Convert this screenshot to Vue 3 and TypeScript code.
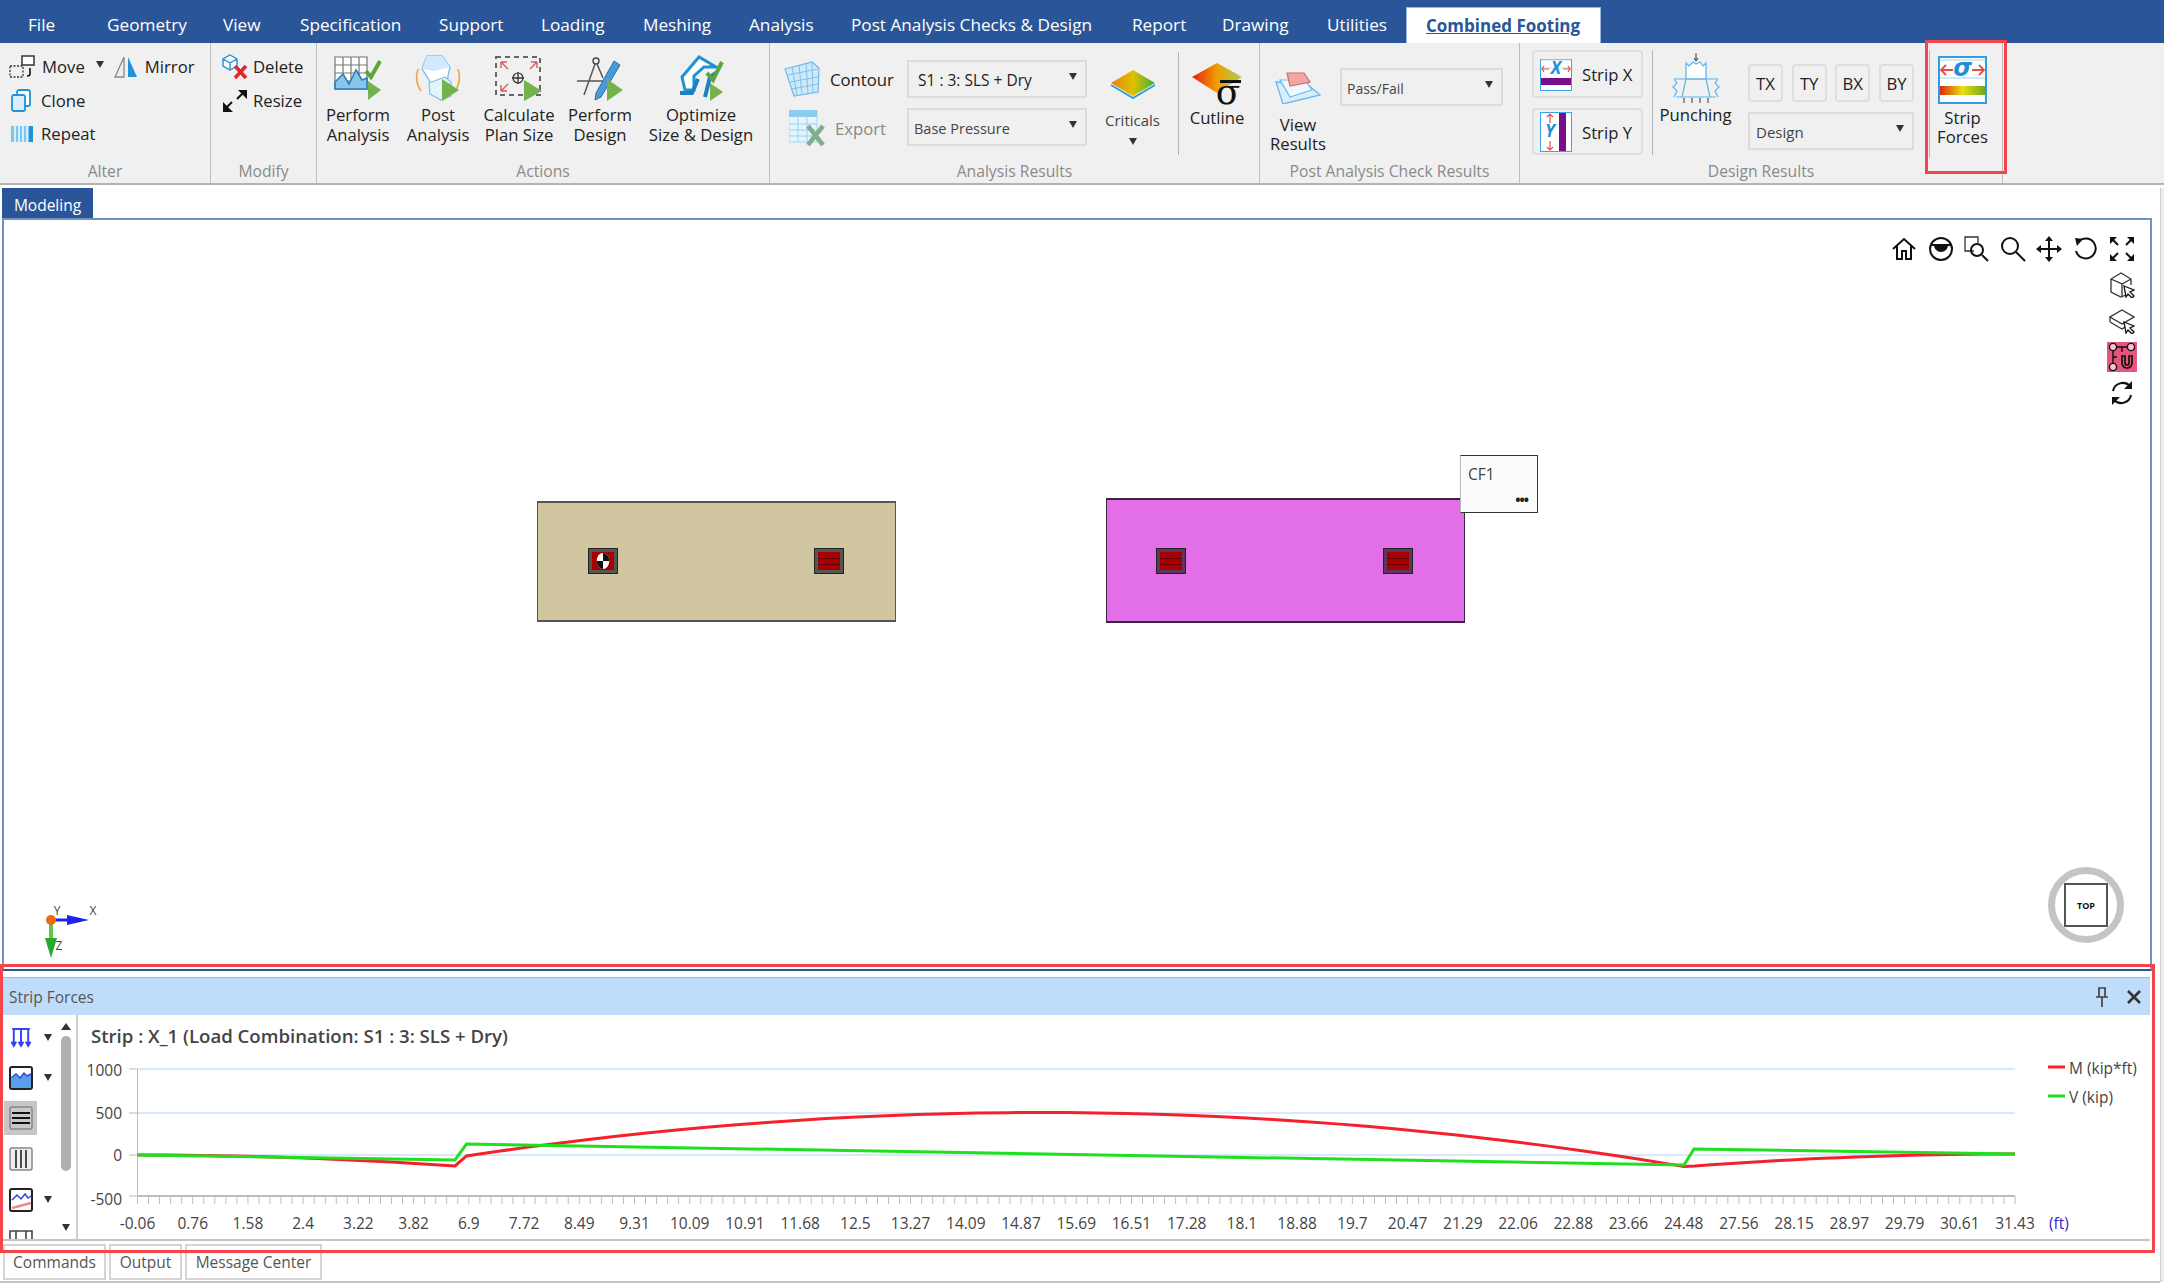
<script setup lang="ts">
const menus = ['Geometry', 'View', 'Specification', 'Support', 'Loading', 'Meshing', 'Analysis', 'Post Analysis Checks & Design', 'Report', 'Drawing', 'Utilities']

const xLabels = ['-0.06', '0.76', '1.58', '2.4', '3.22', '3.82', '6.9', '7.72', '8.49', '9.31', '10.09', '10.91', '11.68', '12.5', '13.27', '14.09', '14.87', '15.69', '16.51', '17.28', '18.1', '18.88', '19.7', '20.47', '21.29', '22.06', '22.88', '23.66', '24.48', '27.56', '28.15', '28.97', '29.79', '30.61', '31.43']
const X0 = 137.5
const X1 = 2015
const step = (X1 - X0) / (xLabels.length - 1)
const labelX = (i: number) => X0 + i * step
const ticks = Array.from({ length: (xLabels.length - 1) * 5 + 1 }, (_, i) => X0 + (i * step) / 5)

const grid = [
  { y: 1070, ly: 1077, label: '1000' },
  { y: 1114, ly: 1120, label: '500' },
  { y: 1156, ly: 1162, label: '0' },
  { y: 1197, ly: 1206, label: '-500' },
]

function moment(): string {
  const pts: string[] = []
  for (let i = 0; i <= 20; i++) {
    const t = i / 20
    pts.push(`${X0 + t * (455 - X0)},${1156 + 11 * t * t}`)
  }
  const k = 43.5 / (576 * 576)
  for (let x = 466.5; x <= 1684; x += 30) {
    pts.push(`${x},${1113.5 + k * (x - 1042) * (x - 1042)}`)
  }
  pts.push('1684,1167.5')
  for (let i = 0; i <= 20; i++) {
    const t = i / 20
    pts.push(`${1695 + t * (X1 - 1695)},${1155 + 12 * (1 - t) * (1 - t)}`)
  }
  return pts.join(' ')
}
const mPts = moment()
const vPts = `${X0},1156 455,1161 466.5,1145 1684,1166 1694,1150 ${X1},1155`
</script>

<template>
  <div class="app">
    <nav class="menubar">
      <span class="menu">File</span>
      <span v-for="m in menus" :key="m" class="menu">{{ m }}</span>
      <span class="menu-active"><u>Combined Footing</u></span>
    </nav>

    <section class="ribbon">
      <!-- Alter -->
      <div class="group g-alter">
        <div class="body rows">
          <div class="row r-move">
            <svg class="i-move" width="26" height="24" viewBox="0 0 26 24">
              <rect x="1" y="11" width="13" height="11" fill="none" stroke="#333" stroke-width="1.3" stroke-dasharray="2 1.5" />
              <rect x="13" y="1" width="12" height="9" fill="#fff" stroke="#333" stroke-width="1.5" />
              <path d="M21 13v6q0 2-3 2" fill="none" stroke="#111" stroke-width="1.6" />
            </svg>
            <span class="t-move">Move</span>
            <i class="caret c-move"></i>
            <svg class="i-mirror" width="24" height="24" viewBox="0 0 24 24">
              <path d="M10 2L1 22h9z" fill="#eee" stroke="#888" stroke-width="1.3" />
              <path d="M14 2l9 20h-9z" fill="#1f93d6" />
            </svg>
            <span>Mirror</span>
          </div>
          <div class="row r-clone">
            <svg width="20" height="24" viewBox="0 0 20 24">
              <rect x="6" y="2" width="13" height="16" rx="2" fill="#fff" stroke="#1f93d6" stroke-width="1.8" />
              <rect x="1" y="7" width="13" height="16" rx="2" fill="#d9efff" stroke="#1f93d6" stroke-width="1.8" />
            </svg>
            <span>Clone</span>
          </div>
          <div class="row r-repeat">
            <svg width="22" height="20" viewBox="0 0 22 20">
              <rect x="0" y="2" width="22" height="16" fill="#7cc6f2" />
              <path d="M4 2v16M8 2v16M12 2v16M16 2v16" stroke="#fff" stroke-width="1.4" />
              <rect x="18" y="2" width="4" height="16" fill="#1f93d6" />
            </svg>
            <span>Repeat</span>
          </div>
        </div>
        <div class="gtitle">Alter</div>
      </div>

      <!-- Modify -->
      <div class="group g-modify">
        <div class="body rows">
          <div class="row">
            <svg width="26" height="25" viewBox="0 0 26 25">
              <path d="M8 1l7 4v7l-7 4-7-4V5zM1 5l7 4 7-4M8 9v7" fill="#fff" stroke="#2b8fd0" stroke-width="1.4" />
              <path d="M13 12l11 12M24 12L13 24" stroke="#e0282e" stroke-width="3.6" />
            </svg>
            <span>Delete</span>
          </div>
          <div class="row">
            <svg width="26" height="25" viewBox="0 0 26 25">
              <path d="M15 11l7-7M2 22l8-8" stroke="#111" stroke-width="2" />
              <path d="M16 2h9v9zM1 14v10h10z" fill="#111" />
            </svg>
            <span>Resize</span>
          </div>
        </div>
        <div class="gtitle">Modify</div>
      </div>

      <!-- Actions -->
      <div class="group g-actions">
        <div class="body actions">
          <div class="big">
            <svg width="48" height="46" viewBox="0 0 48 46">
              <path d="M1 2h32v32H1zM1 10h32M1 18h32M1 26h32M9 2v32M17 2v32M25 2v32" fill="#fff" stroke="#777" stroke-width="1.2" />
              <path d="M1 34V27l8-8 6 10 7-14 6 10 5-2v11z" fill="#8bc3ea" stroke="#2a7fc0" stroke-width="1.6" />
              <path d="M32 16l5 6 9-16" fill="none" stroke="#5aa83c" stroke-width="4" />
              <path d="M34 26l13 9-13 10z" fill="#74b24c" />
            </svg>
            <span class="lbl">Perform<br />Analysis</span>
          </div>
          <div class="big">
            <svg width="50" height="46" viewBox="0 0 50 46">
              <path d="M5 14q-4 12 3 22M45 14q4 12-3 22" fill="none" stroke="#f0a63a" stroke-width="1.6" />
              <path d="M14 1h15l8 11-3 14-16 2-9-14z" fill="#fff" stroke="#7fc2f0" stroke-width="1.4" />
              <path d="M14 1h15l8 11-16 4-12-2z" fill="#cfeaff" />
              <path d="M16 28l16-6 6 5v14l-10 4-11-6z" fill="#e4f4ff" stroke="#7fc2f0" stroke-width="1.3" />
              <path d="M29 24l17 11-17 11z" fill="#74b24c" />
            </svg>
            <span class="lbl">Post<br />Analysis</span>
          </div>
          <div class="big">
            <svg width="48" height="46" viewBox="0 0 48 46">
              <rect x="1" y="2" width="44" height="38" fill="none" stroke="#666" stroke-width="2" stroke-dasharray="5 4" />
              <path d="M6 7l7 7M6 7v6M6 7h6M42 7l-7 7M42 7v6M42 7h-6M6 36l7-7M6 36v-6M6 36h6" fill="none" stroke="#d85a5a" stroke-width="1.4" />
              <circle cx="23" cy="23" r="5" fill="none" stroke="#333" stroke-width="1.2" />
              <path d="M23 17v12M17 23h12" stroke="#333" stroke-width="1.3" />
              <path d="M29 25l18 11-18 10z" fill="#74b24c" />
            </svg>
            <span class="lbl">Calculate<br />Plan Size</span>
          </div>
          <div class="big">
            <svg width="48" height="46" viewBox="0 0 48 46">
              <circle cx="20" cy="6" r="3" fill="none" stroke="#444" stroke-width="1.4" />
              <path d="M19 9L8 40M21 9l6 14M1 26h32" stroke="#555" stroke-width="1.5" fill="none" />
              <path d="M38 6l6 4-19 32-6 3 1-7z" fill="#4a9ad8" stroke="#2a6ea8" stroke-width="1" />
              <path d="M31 24l16 11-16 11z" fill="#74b24c" />
            </svg>
            <span class="lbl">Perform<br />Design</span>
          </div>
          <div class="big">
            <svg width="48" height="46" viewBox="0 0 48 46">
              <path d="M5 22L22 2l17 10-12 0-10 9v14H8z" fill="#fff" stroke="#1f93d6" stroke-width="3" />
              <path d="M3 38l12 0 6-14M28 42l5-20 6-4" fill="none" stroke="#1f7fc4" stroke-width="4" />
              <path d="M30 18l6 7 9-18" fill="none" stroke="#5aa83c" stroke-width="4" />
              <path d="M33 28l13 9-13 9z" fill="#74b24c" />
            </svg>
            <span class="lbl">Optimize<br />Size &amp; Design</span>
          </div>
        </div>
        <div class="gtitle">Actions</div>
      </div>

      <!-- Analysis Results -->
      <div class="group g-analysis">
        <div class="body flex">
          <div class="ar-left">
            <div class="ar-row">
              <div class="lead l-contour">
                <svg width="36" height="36" viewBox="0 0 36 36">
                  <path d="M1 8L28 1l7 6-1 24-24 4z" fill="#cfe9fb" stroke="#6db9ea" stroke-width="1.2" />
                  <path d="M4 14l30-6M6 21l28-5M8 28l26-5M8 6l5 28M15 4l3 30M22 3l2 30M28 2l1 30" stroke="#7cc3ee" stroke-width="1" fill="none" />
                </svg>
                <span>Contour</span>
              </div>
              <div class="combo c-s1"><span>S1 : 3: SLS + Dry</span><i class="caret"></i></div>
            </div>
            <div class="ar-row">
              <div class="lead l-export">
                <svg width="36" height="36" viewBox="0 0 36 36">
                  <rect x="0" y="0" width="28" height="32" fill="#e6f4fd" stroke="#a8d5f2" />
                  <rect x="0" y="0" width="28" height="7" fill="#8ccbf0" />
                  <path d="M0 14h28M0 20h28M0 26h28M9 7v25M18 7v25" stroke="#9ad0f0" />
                  <path d="M19 16l15 19M34 16L19 35" stroke="#7fae8e" stroke-width="4.5" />
                </svg>
                <span class="muted">Export</span>
              </div>
              <div class="combo c-base"><span>Base Pressure</span><i class="caret"></i></div>
            </div>
          </div>
          <div class="col-critical">
            <svg width="46" height="30" viewBox="0 0 46 30">
              <defs>
                <linearGradient id="gcrit" x1="0" x2="1" y1="0" y2="0">
                  <stop offset="0" stop-color="#e88010" />
                  <stop offset="0.5" stop-color="#e0c000" />
                  <stop offset="1" stop-color="#3fae3a" />
                </linearGradient>
              </defs>
              <path d="M1 16L23 29l22-13" fill="none" stroke="#2f9ee0" stroke-width="2" />
              <path d="M1 14L23 1l22 13-22 13z" fill="url(#gcrit)" />
            </svg>
            <span class="lbl crit-label">Criticals</span>
            <i class="caret crit-caret"></i>
          </div>
          <div class="vsep s-analysis"></div>
          <div class="col-cutline">
            <svg width="50" height="44" viewBox="0 0 50 44">
              <defs>
                <linearGradient id="gcut" x1="0" x2="1" y1="0" y2="0">
                  <stop offset="0" stop-color="#e81a10" />
                  <stop offset="0.5" stop-color="#f0a000" />
                  <stop offset="1" stop-color="#a8d050" />
                </linearGradient>
              </defs>
              <path d="M0 14L25 0l25 14-25 16z" fill="url(#gcut)" />
              <text x="36" y="41" class="sigma">σ</text>
              <rect x="28" y="17" width="21" height="3" fill="#111" />
            </svg>
            <span class="lbl">Cutline</span>
          </div>
        </div>
        <div class="gtitle">Analysis Results</div>
      </div>

      <!-- Post Analysis -->
      <div class="group g-post">
        <div class="body flex">
          <div class="col-view">
            <svg width="46" height="32" viewBox="0 0 46 32">
              <path d="M1 10l32 3 12 10-37 9z" fill="#d9eefc" stroke="#6db9ea" stroke-width="1.3" />
              <path d="M5 8l25 0 7 10-22 7z" fill="#eef8ff" stroke="#6db9ea" stroke-width="1.2" />
              <path d="M12 1h17l6 9-20 4z" fill="#f4a6a4" stroke="#d46a6a" stroke-width="1.2" />
            </svg>
            <span class="lbl view-label">View<br />Results</span>
          </div>
          <div class="combo c-pass"><span>Pass/Fail</span><i class="caret"></i></div>
        </div>
        <div class="gtitle">Post Analysis Check Results</div>
      </div>

      <!-- Design Results -->
      <div class="group g-design">
        <div class="body flex">
          <div class="strip-col">
            <div class="strip-btn">
              <svg width="32" height="32" viewBox="0 0 32 32">
                <rect x="0.5" y="0.5" width="31" height="31" fill="#fff" stroke="#3aa3e3" />
                <path d="M1 1h30M1 9h30" stroke="#bfe2f8" />
                <rect x="1" y="19" width="30" height="7" fill="#7a0d8c" />
                <text x="16" y="15" class="ico-letter">X</text>
                <path d="M9 10H2m2-3L2 10l2 3M23 10h7m-2-3l2 3-2 3" fill="none" stroke="#e84a4a" stroke-width="1.2" />
              </svg>
              <span>Strip X</span>
            </div>
            <div class="strip-btn">
              <svg width="32" height="40" viewBox="0 0 32 40">
                <rect x="0.5" y="0.5" width="31" height="39" fill="#fff" stroke="#3aa3e3" />
                <rect x="19" y="1" width="7" height="38" fill="#7a0d8c" />
                <text x="10" y="25" class="ico-letter">Y</text>
                <path d="M10 11V2M7 5l3-3 3 3M10 29v9M7 35l3 3 3-3" fill="none" stroke="#e84a4a" stroke-width="1.2" />
              </svg>
              <span>Strip Y</span>
            </div>
          </div>
          <div class="vsep s-strip"></div>
          <div class="col-punch">
            <svg width="48" height="50" viewBox="0 0 48 50">
              <path d="M24 0v7M22 5l2 3 2-3" stroke="#333" fill="none" />
              <path d="M14 10l3 3 4-4 3 2 4-2 3 4 3-3v16H14z" fill="#fff" stroke="#5db3ea" stroke-width="1.2" />
              <path d="M2 26h44M4 44h40M14 26l-4 18M34 26l4 18" stroke="#5db3ea" stroke-width="1.2" fill="none" />
              <path d="M2 26l3 4-4 4 4 4-3 6M46 26l-3 4 4 4-4 4 3 6" stroke="#5db3ea" stroke-width="1.2" fill="none" />
              <path d="M12 50v-5M20 50v-5M28 50v-5M36 50v-5" stroke="#333" />
            </svg>
            <span class="lbl">Punching</span>
          </div>
          <div class="col-design">
            <div class="tx-row">
              <span class="tx">TX</span><span class="tx">TY</span><span class="tx">BX</span><span class="tx">BY</span>
            </div>
            <div class="combo c-design"><span>Design</span><i class="caret"></i></div>
          </div>
          <div class="vsep s-forces"></div>
          <div class="col-forces">
            <svg width="49" height="48" viewBox="0 0 49 48">
              <defs>
                <linearGradient id="gforce" x1="0" x2="1" y1="0" y2="0">
                  <stop offset="0" stop-color="#d82a10" />
                  <stop offset="0.5" stop-color="#e8e010" />
                  <stop offset="1" stop-color="#6ea820" />
                </linearGradient>
              </defs>
              <rect x="1" y="1" width="47" height="46" fill="#fff" stroke="#2f9ee0" stroke-width="2" />
              <path d="M2 4h45M2 22h45" stroke="#bfe2f8" stroke-width="1.4" />
              <rect x="2" y="30" width="45" height="9" fill="url(#gforce)" />
              <text x="24.5" y="20" class="ico-sigma">σ</text>
              <path d="M15 14H4m4-5l-5 5 5 5M34 14h11m-4-5l5 5-5 5" fill="none" stroke="#e84a4a" stroke-width="1.8" />
            </svg>
            <span class="lbl forces-label">Strip<br />Forces</span>
          </div>
        </div>
        <div class="gtitle">Design Results</div>
      </div>
    </section>

    <div class="work">
      <div class="main">
        <div class="doc-tabs"><span class="doc-tab">Modeling</span></div>

        <div class="viewport">
          <div class="footing f-tan">
            <div class="column k1">
              <svg class="marker" width="18" height="20" viewBox="0 0 18 20">
                <ellipse cx="9" cy="10" rx="7" ry="9" fill="#fff" />
                <path d="M9 1a7 9 0 0 1 7 9H9zM9 19a7 9 0 0 1-7-9h7z" fill="#111" />
              </svg>
            </div>
            <div class="column k2"><i></i></div>
          </div>
          <div class="footing f-pink">
            <div class="column k1"><i></i></div>
            <div class="column k2"><i></i></div>
          </div>
          <div class="tag">
            <span>CF1</span>
            <b>•••</b>
          </div>

          <div class="view-tools">
            <div class="view-row">
              <svg class="vi" viewBox="0 0 26 26"><path d="M2 13L13 3l11 10M6 10v13h5v-8h4v8h5V10" /></svg>
              <svg class="vi" viewBox="0 0 26 26"><circle cx="13" cy="13" r="11" /><path d="M2 9h22" /><path class="fill" d="M6 9h14a7 7 0 0 1-14 0z" /></svg>
              <svg class="vi" viewBox="0 0 26 26"><path class="thin" d="M10 15H1V1h13v6" /><circle cx="13" cy="14" r="6" /><path d="M18 19l6 6" /></svg>
              <svg class="vi" viewBox="0 0 26 26"><circle cx="10" cy="10" r="8" /><path d="M16 16l9 9" /></svg>
              <svg class="vi" viewBox="0 0 26 26"><path d="M13 2v22M2 13h22" /><path class="fill" d="M13 0l4 5H9zM13 26l4-5H9zM0 13l5-4v8zM26 13l-5-4v8z" /></svg>
              <svg class="vi" viewBox="0 0 26 26"><path d="M6 5a10 10 0 1 1-3 10" /><path class="fill" d="M2 2l8 1-6 7z" /></svg>
              <svg class="vi" viewBox="0 0 26 26"><path d="M4 4l5 5M22 4l-5 5M4 22l5-5M22 22l-5-5" /><path class="fill" d="M1 1h7L1 8zM25 1h-7l7 7zM1 25h7l-7-7zM25 25h-7l7-7z" /></svg>
            </div>
            <svg class="vi" viewBox="0 0 26 26"><path class="thin" d="M17 23l-5 2-10-5V7l10-6 10 6v6M2 7l11 5v13M13 12l9-5" /><path class="cursor" d="M15 14l10 4-4 2 4 4-2 2-4-4-2 3z" /></svg>
            <svg class="vi" viewBox="0 0 26 26"><path class="thin" d="M13 2l12 7-12 7L1 9zM1 14l12 7 3-2M1 9v5" /><path class="cursor" d="M15 14l10 4-4 2 4 4-2 2-4-4-2 3z" /></svg>
            <div class="magnet">
              <svg width="30" height="30" viewBox="0 0 30 30">
                <g fill="none" stroke="#111" stroke-width="1.4">
                  <circle cx="6" cy="5" r="3.6" fill="#f5c5d2" /><circle cx="24" cy="5" r="3.6" fill="#f5c5d2" /><circle cx="6" cy="25" r="3.6" fill="#f5c5d2" />
                  <path d="M10 5h10M6 9v12M15 5v5M6 15h4" />
                  <path d="M15 14v7a5 5 0 0 0 10 0v-7h-3v7a2 2 0 0 1-4 0v-7z" stroke-width="1.7" />
                </g>
              </svg>
            </div>
            <svg class="vi" viewBox="0 0 26 26"><path d="M4 11A10 10 0 0 1 21 6M22 15A10 10 0 0 1 5 20" /><path class="fill" d="M23 1v8h-8zM3 25v-8h8z" /></svg>
          </div>

          <svg class="axes" width="60" height="60" viewBox="0 0 60 60">
            <text x="16" y="15" class="axis-txt">Y</text>
            <text x="52" y="15" class="axis-txt">X</text>
            <text x="18" y="50" class="axis-txt">Z</text>
            <path d="M10 20h22" stroke="#2222ee" stroke-width="3" />
            <path d="M26 15l22 5-22 5z" fill="#2222ee" />
            <path d="M10 20v24" stroke="#55cc44" stroke-width="4" />
            <path d="M4 38l6 20 6-20z" fill="#22aa33" />
            <circle cx="10" cy="20" r="5" fill="#ee6a10" />
          </svg>

          <div class="cube">
            <div class="cube-face">TOP</div>
          </div>
        </div>

        <div class="panel">
          <header class="panel-head">
            <span>Strip Forces</span>
            <span class="head-icons">
              <svg width="16" height="20" viewBox="0 0 16 20"><path d="M4 1h8M5 1v9M11 1v9M2 10h12M8 10v10" fill="none" stroke="#444" stroke-width="1.7" /></svg>
              <svg width="16" height="16" viewBox="0 0 16 16"><path d="M2 2l12 12M14 2L2 14" stroke="#333" stroke-width="2.6" /></svg>
            </span>
          </header>
          <div class="panel-body">
            <aside class="side">
              <div class="tools">
                <div class="tool">
                  <svg class="ti" viewBox="-3 0 30 24"><path d="M1 2h22M3 2v19M12 2v19M21 2v19M0 18l3 5 3-5M9 18l3 5 3-5M18 18l3 5 3-5" fill="none" stroke="#3344ee" stroke-width="2.4" /></svg>
                  <i class="caret"></i>
                </div>
                <div class="tool">
                  <svg class="ti" viewBox="0 0 24 24"><rect x="1" y="1" width="22" height="22" rx="2" fill="#fff" stroke="#222" stroke-width="2" /><path d="M2 13l5-5 4 4 4-5 3 3 4-2v14H2z" fill="#5a9fe8" /><path d="M2 12l5-4 4 4 4-5 3 3 4-2" fill="none" stroke="#2b44e0" stroke-width="1.4" /></svg>
                  <i class="caret"></i>
                </div>
                <div class="tool">
                  <div class="tool-on">
                    <svg class="ti" viewBox="0 0 24 24"><rect x="1" y="1" width="22" height="22" rx="2" fill="#c8c8c8" stroke="#888" stroke-width="1.5" /><path d="M3 7h18M3 12h18M3 17h18" stroke="#111" stroke-width="1.8" /></svg>
                  </div>
                </div>
                <div class="tool">
                  <svg class="ti" viewBox="0 0 24 24"><rect x="1" y="1" width="22" height="22" rx="2" fill="#eee" stroke="#888" stroke-width="1.5" /><path d="M7 3v18M12 3v18M17 3v18" stroke="#222" stroke-width="1.6" /></svg>
                </div>
                <div class="tool">
                  <svg class="ti" viewBox="0 0 24 24"><rect x="1" y="1" width="22" height="22" rx="2" fill="#fff" stroke="#222" stroke-width="2" /><path d="M3 12l5-5 4 4 4-5 3 4 3-2" fill="none" stroke="#2b44e0" stroke-width="1.5" /><path d="M3 20l19-5" stroke="#f08a8a" stroke-width="2.4" /></svg>
                  <i class="caret"></i>
                </div>
                <div class="tool">
                  <svg class="ti" viewBox="0 0 24 24"><path d="M1 23V3h22v20M7 3v20M17 3v20" fill="none" stroke="#444" stroke-width="1.6" /></svg>
                </div>
              </div>
              <div class="scroll">
                <i class="arrow-up"></i>
                <div class="thumb"></div>
                <i class="caret arrow-down"></i>
              </div>
            </aside>

            <svg class="chart" width="2072" height="224" viewBox="78 1016 2072 224">
              <text x="91" y="1044" class="chart-title">Strip : X_1 (Load Combination: S1 : 3: SLS + Dry)</text>

              <g v-for="g in grid" :key="g.label">
                <line v-if="g.label !== '-500'" :x1="X0" :x2="X1" :y1="g.y" :y2="g.y" class="gridline" />
                <line x1="129" :x2="X0" :y1="g.y" :y2="g.y" class="axis" />
                <text x="122" :y="g.ly" class="ylab">{{ g.label }}</text>
              </g>

              <line :x1="X0" :x2="X0" y1="1070" y2="1205" class="axis" />
              <line :x1="X0" :x2="X1" y1="1197" y2="1197" class="axis axis-x" />
              <line v-for="t in ticks" :key="t" :x1="t" :x2="t" y1="1197" y2="1205" class="axis" />

              <text v-for="(l, i) in xLabels" :key="l" :x="labelX(i)" y="1230" class="xlab">{{ l }}</text>
              <text x="2049" y="1230" class="unit">(ft)</text>

              <polyline :points="mPts" class="line-m" />
              <polyline :points="vPts" class="line-v" />

              <line x1="2048" x2="2065" y1="1068" y2="1068" class="line-m" />
              <text x="2069" y="1075" class="legend">M (kip*ft)</text>
              <line x1="2048" x2="2065" y1="1097" y2="1097" class="line-v" />
              <text x="2069" y="1104" class="legend">V (kip)</text>
            </svg>
          </div>
        </div>

        <div class="bottom-tabs">
          <span class="btab">Commands</span>
          <span class="btab">Output</span>
          <span class="btab">Message Center</span>
        </div>
      </div>
      <div class="edge"></div>
    </div>

    <div class="red-forces"></div>
    <div class="red-panel"></div>
  </div>
</template>

<style scoped>
.app {
  position: relative;
  width: 2164px;
  height: 1283px;
  overflow: hidden;
  display: flex;
  flex-direction: column;
  background: #fff;
  font-family: "Open Sans", "Liberation Sans", sans-serif;
  font-size: 16.7px;
  color: #222;
}
.menubar {
  height: 43px;
  flex: none;
  background: #2a5699;
  display: grid;
  grid-template-columns: 79px 116px 77px 139px 102px 102px 106px 102px 281px 90px 105px 79px 195px;
  grid-template-rows: 43px;
  padding-left: 28px;
  box-sizing: border-box;
}
.menu {
  color: #fff;
  font-size: 17.2px;
  white-space: nowrap;
  padding-top: 7px;
  line-height: 36px;
}
.menu-active {
  align-self: end;
  height: 36px;
  background: #fff;
  color: #2a5699;
  font-weight: 700;
  font-size: 17px;
  line-height: 35px;
  padding-left: 19px;
  border: 1px solid #9db6d8;
  border-bottom: 0;
  box-sizing: border-box;
  white-space: nowrap;
}

.ribbon {
  height: 142px;
  flex: none;
  display: flex;
  background: #f0f0f0;
  border-bottom: 2px solid #b4b4b4;
  box-sizing: border-box;
}
.group {
  display: flex;
  flex-direction: column;
  border-right: 1px solid #bdbdbd;
  box-sizing: border-box;
  height: 140px;
}
.g-alter { width: 211px; }
.g-modify { width: 106px; }
.g-actions { width: 453px; }
.g-analysis { width: 490px; }
.g-post { width: 260px; }
.g-design { width: 483px; }
.body {
  height: 120px;
  flex: none;
}
.gtitle {
  height: 20px;
  line-height: 17px;
  text-align: center;
  color: #8a8a8a;
  font-size: 15.7px;
}
.flex { display: flex; }
.rows {
  display: grid;
  grid-template-rows: repeat(3, 33.5px);
  padding-top: 7px;
  box-sizing: border-box;
}
.row {
  display: flex;
  align-items: center;
  white-space: nowrap;
}
.g-alter .row { padding-left: 11px; }
.g-alter .r-move { padding-left: 9px; }
.i-move { flex: none; }
.t-move { margin-left: 7px; }
.c-move { margin-left: 11px; margin-bottom: 5px; }
.i-mirror { margin: 0 7px 0 10px; }
.r-clone span { margin-left: 10px; }
.r-repeat span { margin-left: 8px; }
.g-modify .row { padding-left: 11px; gap: 5px; }

.caret {
  display: inline-block;
  width: 0;
  height: 0;
  border-left: 4.5px solid transparent;
  border-right: 4.5px solid transparent;
  border-top: 7px solid #333;
  flex: none;
}

.actions {
  display: grid;
  grid-template-columns: 82px 78px 84px 78px 124px;
}
.big {
  display: flex;
  flex-direction: column;
  align-items: center;
  padding-top: 12px;
}
.lbl {
  display: block;
  line-height: 20px;
  text-align: center;
  white-space: nowrap;
}
.big .lbl { margin-top: 4px; }

.ar-left {
  width: 317px;
  padding-top: 17px;
  display: flex;
  flex-direction: column;
  gap: 10px;
}
.ar-row { display: flex; }
.lead {
  width: 137px;
  display: flex;
  align-items: center;
  gap: 10px;
  flex: none;
}
.l-contour { padding-left: 14px; box-sizing: border-box; }
.l-export { padding-left: 19px; box-sizing: border-box; padding-top: 2px; }
.muted { color: #888; }
.combo {
  display: flex;
  align-items: center;
  justify-content: space-between;
  height: 38px;
  width: 180px;
  box-sizing: border-box;
  border: 2px solid #dcdcdc;
  padding: 2px 8px 0 9px;
  font-size: 15.5px;
  white-space: nowrap;
}
.combo .caret { margin-bottom: 8px; }
.c-base { padding-left: 5px; font-size: 14.5px; color: #444; }
.col-critical {
  width: 91px;
  padding-top: 26px;
  display: flex;
  flex-direction: column;
  align-items: center;
  flex: none;
}
.crit-label { margin-top: 11px; color: #444; font-size: 15px; }
.crit-caret { margin-top: 8px; }
.vsep {
  width: 1px;
  background: #b5b5b5;
  flex: none;
}
.s-analysis { margin-top: 9px; height: 103px; }
.col-cutline {
  width: 76px;
  padding-top: 20px;
  display: flex;
  flex-direction: column;
  align-items: center;
  flex: none;
}
.col-cutline .lbl { margin-top: 1px; }
.col-view {
  width: 76px;
  padding-top: 29px;
  display: flex;
  flex-direction: column;
  align-items: center;
  flex: none;
}
.view-label { margin-top: 11px; line-height: 19px; }
.c-pass {
  width: 163px;
  margin: 25px 0 0 4px;
  padding-left: 5px;
  font-size: 14px;
  color: #444;
}
.strip-col {
  margin: 7px 0 0 12px;
  width: 111px;
  display: flex;
  flex-direction: column;
  gap: 10px;
  flex: none;
}
.strip-btn {
  height: 47.5px;
  box-sizing: border-box;
  border: 2px solid #dedede;
  border-radius: 4px;
  display: flex;
  align-items: center;
  padding: 2px 0 0 6px;
  gap: 10px;
  white-space: nowrap;
}
.s-strip { margin: 7px 0 0 9px; height: 105px; }
.col-punch {
  width: 85px;
  padding-top: 10px;
  display: flex;
  flex-direction: column;
  align-items: center;
  flex: none;
}
.col-punch .lbl { margin-top: 2px; }
.col-design {
  width: 166px;
  margin: 21px 0 0 10px;
  flex: none;
  display: flex;
  flex-direction: column;
  gap: 10px;
}
.tx-row { display: flex; justify-content: space-between; }
.tx {
  width: 35px;
  height: 38px;
  box-sizing: border-box;
  border: 2px solid #dedede;
  border-radius: 4px;
  display: flex;
  align-items: center;
  justify-content: center;
}
.c-design { width: 166px; padding-left: 6px; color: #444; font-size: 15px; }
.s-forces { margin: 7px 0 0 15px; height: 108px; }
.col-forces {
  width: 65px;
  padding-top: 13px;
  display: flex;
  flex-direction: column;
  align-items: center;
  flex: none;
}
.forces-label { margin-top: 4px; line-height: 19px; }
.sigma { font-family: "DejaVu Serif", serif; font-size: 36px; font-weight: 400; text-anchor: middle; fill: #111; }
.ico-letter { font-family: "Open Sans", sans-serif; font-size: 17px; font-weight: 700; font-style: italic; text-anchor: middle; fill: #1f8fd6; }
.ico-sigma { font-family: "DejaVu Sans", sans-serif; font-size: 24px; font-weight: 700; font-style: italic; text-anchor: middle; fill: #1f8fd6; }

.work {
  flex: 1;
  display: flex;
  min-height: 0;
}
.main {
  width: 2160px;
  flex: none;
  display: flex;
  flex-direction: column;
}
.edge {
  flex: 1;
  margin-top: 3px;
  margin-bottom: 1px;
  background: #e4edf8;
  border-left: 1px solid #cfcfcf;
}
.doc-tabs {
  height: 33px;
  padding: 3px 0 0 2px;
  box-sizing: border-box;
  flex: none;
}
.doc-tab {
  display: block;
  width: 91px;
  height: 30px;
  line-height: 34px;
  text-align: center;
  background: #2a5699;
  color: #fff;
  font-size: 15.5px;
}
.viewport {
  position: relative;
  flex: none;
  height: 753px;
  width: 2150px;
  margin-left: 2px;
  box-sizing: border-box;
  border: 2px solid #6f92c1;
  border-bottom-color: #2a5699;
  background: #fff;
}
.footing {
  position: absolute;
  box-sizing: border-box;
  border-style: solid;
  border-width: 2px 1px;
  border-color: #555;
}
.f-tan { left: 533px; top: 281px; width: 359px; height: 121px; background: #d0c7a1; }
.f-pink { left: 1102px; top: 278px; width: 359px; height: 125px; background: #e26fe8; border-color: #3b2440; }
.column {
  position: absolute;
  top: 46px;
  width: 28px;
  height: 24px;
  box-sizing: border-box;
  border: 3px solid #555;
  box-shadow: 0 0 0 1px #222;
  background: #a80000;
  display: flex;
  align-items: center;
  justify-content: center;
}
.f-pink .column { top: 49px; border-color: #5b3760; }
.column i {
  width: 100%;
  height: 5px;
  border-top: 1px solid #600;
  border-bottom: 1px solid #600;
  box-sizing: content-box;
}
.f-tan .k1 { left: 51px; }
.f-tan .k2 { left: 277px; }
.f-pink .k1 { left: 50px; }
.f-pink .k2 { left: 277px; }
.marker { height: 18px; }
.tag {
  position: absolute;
  left: 1456px;
  top: 235px;
  width: 78px;
  height: 58px;
  box-sizing: border-box;
  background: #fbfbfb;
  border: 1px solid #333;
  border-left-color: #bbb;
  padding: 7px 7px;
  display: flex;
  flex-direction: column;
  justify-content: space-between;
  font-size: 15.5px;
  color: #444;
}
.tag b { align-self: flex-end; font-size: 14px; line-height: 10px; letter-spacing: -1px; color: #222; margin-right: 2px; }
.view-tools {
  position: absolute;
  top: 16px;
  right: 15px;
  display: flex;
  flex-direction: column;
  align-items: flex-end;
  gap: 10px;
}
.view-row {
  display: flex;
  gap: 10.3px;
}
.vi {
  width: 26px;
  height: 26px;
  display: block;
  fill: none;
  stroke: #111;
  stroke-width: 2;
}
.vi .fill { fill: #111; stroke: none; }
.vi .thin { stroke-width: 1.3; stroke: #333; }
.vi .cursor { fill: #fff; stroke: #111; stroke-width: 1.3; }
.magnet {
  width: 30px;
  height: 30px;
  background: #e8557c;
  margin: -2px -2px -2px 0;
}
.axes {
  position: absolute;
  left: 37px;
  top: 680px;
}
.axis-txt {
  font-size: 12px;
  fill: #444;
  text-anchor: middle;
}
.cube {
  position: absolute;
  left: 2044px;
  top: 647px;
  width: 76px;
  height: 76px;
  box-sizing: border-box;
  border: 7px solid #c4c4c4;
  border-radius: 50%;
  display: flex;
  align-items: center;
  justify-content: center;
}
.cube-face {
  width: 44px;
  height: 44px;
  flex: none;
  box-sizing: border-box;
  border: 2px solid #555;
  background: #fff;
  display: flex;
  align-items: center;
  justify-content: center;
  font-size: 9px;
  font-weight: 700;
  color: #111;
}

.panel {
  flex: none;
  margin: 6px 10px 0 3px;
  height: 264px;
  box-sizing: border-box;
  border-top: 1px solid #b8b8b8;
  border-bottom: 2px solid #c4c4c4;
  display: flex;
  flex-direction: column;
}
.panel-head {
  height: 37px;
  flex: none;
  background: #c0dcfb;
  display: flex;
  align-items: center;
  justify-content: space-between;
  padding: 0 8px 0 6px;
  color: #555;
  font-size: 15.5px;
  box-sizing: border-box;
}
.head-icons {
  display: flex;
  align-items: center;
  gap: 16px;
}
.panel-body {
  flex: 1;
  display: flex;
  min-height: 0;
}
.side {
  width: 75px;
  flex: none;
  box-sizing: border-box;
  border-right: 2px solid #d0d0d0;
  display: flex;
  overflow: hidden;
}
.tools {
  width: 55px;
  flex: none;
  padding-top: 2px;
}
.tool {
  height: 40.6px;
  display: flex;
  align-items: center;
  padding-left: 6px;
  gap: 11px;
}
.ti {
  width: 24px;
  height: 24px;
  flex: none;
  display: block;
}
.tool-on {
  margin-left: -5px;
  width: 33px;
  height: 34px;
  background: #c6c6c6;
  display: flex;
  align-items: center;
  justify-content: center;
}
.scroll {
  width: 16px;
  flex: none;
  padding: 8px 0;
  box-sizing: border-box;
  display: flex;
  flex-direction: column;
  align-items: center;
}
.arrow-up {
  width: 0;
  height: 0;
  border-left: 5px solid transparent;
  border-right: 5px solid transparent;
  border-bottom: 7px solid #333;
}
.thumb {
  width: 10px;
  height: 135px;
  margin-top: 6px;
  border-radius: 5px;
  background: #b0b0b0;
}
.arrow-down { margin-top: auto; }
.chart { flex: none; display: block; }
.chart-title { font-size: 18.6px; font-weight: 600; fill: #444; }
.gridline { stroke: #d9e9fb; stroke-width: 2; }
.axis { stroke: #bdbdbd; stroke-width: 1; }
.axis-x { stroke-width: 2; }
.ylab { font-size: 15.5px; fill: #444; text-anchor: end; }
.xlab { font-size: 15.5px; fill: #444; text-anchor: middle; }
.unit { font-size: 15.5px; fill: #3a22cc; }
.legend { font-size: 15.5px; fill: #444; }
.line-m { fill: none; stroke: #f4202c; stroke-width: 3; }
.line-v { fill: none; stroke: #1fe01f; stroke-width: 3; }

.bottom-tabs {
  flex: none;
  display: flex;
  gap: 3px;
  padding: 3px 0 0 3px;
  height: 42px;
  box-sizing: border-box;
  border-bottom: 2px solid #c4c4c4;
}
.btab {
  height: 36px;
  line-height: 32px;
  box-sizing: border-box;
  border: 2px solid #d4d4d4;
  color: #555;
  font-size: 15.5px;
  text-align: center;
}
.btab:nth-child(1) { width: 103px; }
.btab:nth-child(2) { width: 73px; }
.btab:nth-child(3) { width: 137px; }

.red-forces {
  position: absolute;
  left: 1925px;
  top: 40px;
  width: 82px;
  height: 134px;
  box-sizing: border-box;
  border: 3px solid #f4444c;
}
.red-panel {
  position: absolute;
  left: 0;
  top: 964px;
  width: 2155px;
  height: 289px;
  box-sizing: border-box;
  border: 3px solid #f4444c;
}
</style>
